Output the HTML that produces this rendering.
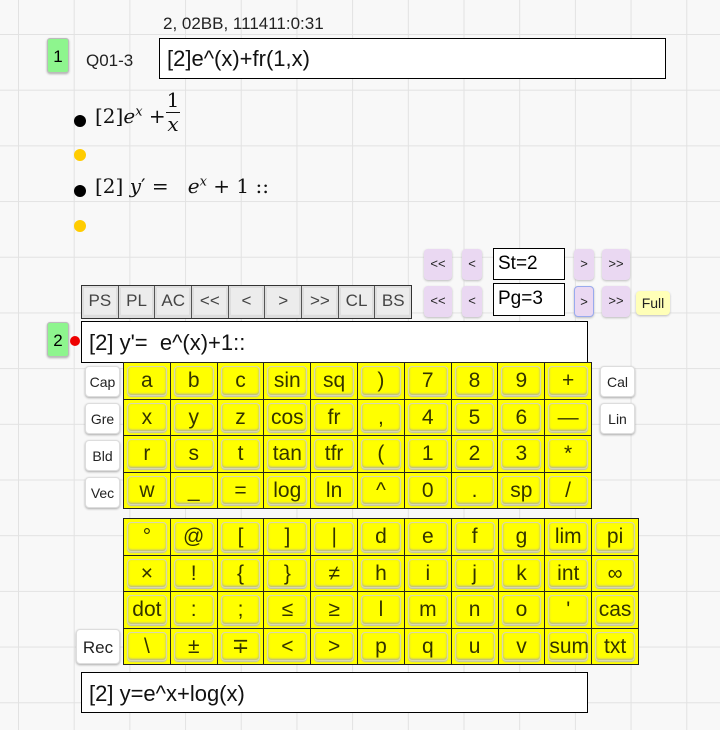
<!DOCTYPE html>
<html><head><meta charset="utf-8"><style>
*{box-sizing:border-box;margin:0;padding:0}
body{width:720px;height:730px;overflow:hidden;position:relative;font-family:"Liberation Sans",sans-serif;
background-color:#f8f8f8;
background-image:linear-gradient(#e2e2e2 1px,transparent 1px),linear-gradient(90deg,#e2e2e2 1px,transparent 1px);
background-size:55.7px 55.7px;background-position:18px 34px}
.a{position:absolute}
.lbl{background:#8ef58e;border:1px solid #bbb;border-radius:3px;font-size:17px;text-align:center;box-shadow:0 1px 2px #aaa}
.inp{background:#fff;border:1px solid #000;font-size:22px;padding-left:7px;color:#111}
.m{font-family:"DejaVu Serif","Liberation Serif",serif;font-size:20px;color:#111}
.dot{width:12px;height:12px;border-radius:6px}
.tb{border:1px solid #333;display:flex;background:#ddd}
.tb div{flex:1;border-right:1px solid #555;background:#ececec;text-align:center;font-size:17px;line-height:30px;color:#444;box-shadow:inset 0 0 0 2px #ddd,inset 0 -2px 2px #bbb}
.tb div:last-child{border-right:0}
.pb{background:#ead8f2;border-radius:4px;font-size:13px;text-align:center;line-height:30px;box-shadow:0 1px 2px #bbb;color:#222}
.bx{background:#fff;border:1px solid #000;font-size:19px;padding-left:4px;line-height:30px}
.kb{display:grid;border:1px solid #222;background:#222;gap:1px}
.kb div{background:#ff0;position:relative;text-align:center;font-size:21px;color:#333300;overflow:hidden;white-space:nowrap}
.kb div span{position:absolute;left:3px;right:3px;top:3px;bottom:3px;border:1px solid #d8d8b0;border-radius:4px;box-shadow:inset 0 -1px 2px #aaa, 0 1px 1px #bbb;line-height:28px}
.sb{background:#fff;border:1px solid #ddd;border-radius:4px;font-size:14px;text-align:center;line-height:30px;box-shadow:0 1px 2px #aaa;color:#222}
</style></head><body>
<div class="a" style="left:163px;top:14px;font-size:17px;color:#222">2, 02BB, 111411:0:31</div>
<div class="a lbl" style="left:47px;top:38px;width:22px;height:35px;line-height:35px">1</div>
<div class="a" style="left:86px;top:51px;font-size:17px;color:#222">Q01-3</div>
<div class="a inp" style="left:159px;top:38px;width:507px;height:41px;line-height:40px">[2]e^(x)+fr(1,x)</div>

<div class="a dot" style="left:74px;top:115px;background:#000"></div>
<div class="a m" style="left:95px;top:104px">[2]<i>e</i><sup style="font-size:13px"><i>x</i></sup> +</div>
<div class="a m" style="left:166px;top:89px;text-align:center;width:14px;line-height:23px">1<div style="border-top:1px solid #111"></div><i>x</i></div>
<div class="a dot" style="left:74px;top:149px;background:#fc0"></div>
<div class="a dot" style="left:74px;top:185px;background:#000"></div>
<div class="a m" style="left:95px;top:174px">[2] <i>y</i>&#8242; = &nbsp;&nbsp;<i>e</i><sup style="font-size:13px"><i>x</i></sup> + 1 ::</div>
<div class="a dot" style="left:74px;top:220px;background:#fc0"></div>

<div class="a pb" style="left:424px;top:249px;width:28px;height:31px">&lt;&lt;</div>
<div class="a pb" style="left:462px;top:249px;width:20px;height:31px">&lt;</div>
<div class="a bx" style="left:493px;top:248px;width:72px;height:32px">St=2</div>
<div class="a pb" style="left:574px;top:249px;width:20px;height:31px">&gt;</div>
<div class="a pb" style="left:602px;top:249px;width:28px;height:31px">&gt;&gt;</div>
<div class="a pb" style="left:424px;top:286px;width:28px;height:31px">&lt;&lt;</div>
<div class="a pb" style="left:462px;top:286px;width:20px;height:31px">&lt;</div>
<div class="a bx" style="left:493px;top:283px;width:72px;height:33px">Pg=3</div>
<div class="a pb" style="left:574px;top:286px;width:20px;height:31px;border:1px solid #9ae">&gt;</div>
<div class="a pb" style="left:602px;top:286px;width:28px;height:31px">&gt;&gt;</div>
<div class="a pb" style="left:636px;top:291px;width:34px;height:24px;line-height:24px;background:#ffffb8;font-size:14px">Full</div>

<div class="a tb" style="left:81px;top:285px;width:331px;height:34px"><div>PS</div><div>PL</div><div>AC</div><div>&lt;&lt;</div><div>&lt;</div><div>&gt;</div><div>&gt;&gt;</div><div>CL</div><div>BS</div></div>

<div class="a lbl" style="left:47px;top:322px;width:22px;height:35px;line-height:35px">2</div>
<div class="a" style="left:70px;top:336px;width:10px;height:10px;border-radius:5px;background:#e00"></div>
<div class="a inp" style="left:81px;top:321px;width:507px;height:42px;line-height:42px">[2] y'= &nbsp;e^(x)+1::</div>

<div class="a sb" style="left:85px;top:366px;width:35px;height:31px">Cap</div>
<div class="a sb" style="left:85px;top:403px;width:35px;height:31px">Gre</div>
<div class="a sb" style="left:85px;top:440px;width:35px;height:31px">Bld</div>
<div class="a sb" style="left:85px;top:477px;width:35px;height:31px">Vec</div>
<div class="a sb" style="left:600px;top:366px;width:35px;height:31px">Cal</div>
<div class="a sb" style="left:600px;top:403px;width:35px;height:31px">Lin</div>
<div class="a sb" style="left:76px;top:629px;width:44px;height:35px;line-height:35px;font-size:17px">Rec</div>

<div class="a kb" style="left:123px;top:362px;width:469px;height:147px;grid-template-columns:repeat(10,1fr);grid-template-rows:repeat(4,1fr)">
<div><span>a</span></div><div><span>b</span></div><div><span>c</span></div><div><span>sin</span></div><div><span>sq</span></div><div><span>)</span></div><div><span>7</span></div><div><span>8</span></div><div><span>9</span></div><div><span>+</span></div>
<div><span>x</span></div><div><span>y</span></div><div><span>z</span></div><div><span>cos</span></div><div><span>fr</span></div><div><span>,</span></div><div><span>4</span></div><div><span>5</span></div><div><span>6</span></div><div><span>—</span></div>
<div><span>r</span></div><div><span>s</span></div><div><span>t</span></div><div><span>tan</span></div><div><span>tfr</span></div><div><span>(</span></div><div><span>1</span></div><div><span>2</span></div><div><span>3</span></div><div><span>*</span></div>
<div><span>w</span></div><div><span>_</span></div><div><span>=</span></div><div><span>log</span></div><div><span>ln</span></div><div><span>^</span></div><div><span>0</span></div><div><span>.</span></div><div><span>sp</span></div><div><span>/</span></div>
</div>

<div class="a kb" style="left:123px;top:518px;width:516px;height:147px;grid-template-columns:repeat(11,1fr);grid-template-rows:repeat(4,1fr)">
<div><span>°</span></div><div><span>@</span></div><div><span>[</span></div><div><span>]</span></div><div><span>|</span></div><div><span>d</span></div><div><span>e</span></div><div><span>f</span></div><div><span>g</span></div><div><span>lim</span></div><div><span>pi</span></div>
<div><span>×</span></div><div><span>!</span></div><div><span>{</span></div><div><span>}</span></div><div><span>≠</span></div><div><span>h</span></div><div><span>i</span></div><div><span>j</span></div><div><span>k</span></div><div><span>int</span></div><div><span>∞</span></div>
<div><span>dot</span></div><div><span>:</span></div><div><span>;</span></div><div><span>≤</span></div><div><span>≥</span></div><div><span>l</span></div><div><span>m</span></div><div><span>n</span></div><div><span>o</span></div><div><span>'</span></div><div><span>cas</span></div>
<div><span>\</span></div><div><span>±</span></div><div><span>∓</span></div><div><span>&lt;</span></div><div><span>&gt;</span></div><div><span>p</span></div><div><span>q</span></div><div><span>u</span></div><div><span>v</span></div><div><span>sum</span></div><div><span>txt</span></div>
</div>

<div class="a inp" style="left:81px;top:672px;width:507px;height:41px;line-height:42px">[2] y=e^x+log(x)</div>
</body></html>
